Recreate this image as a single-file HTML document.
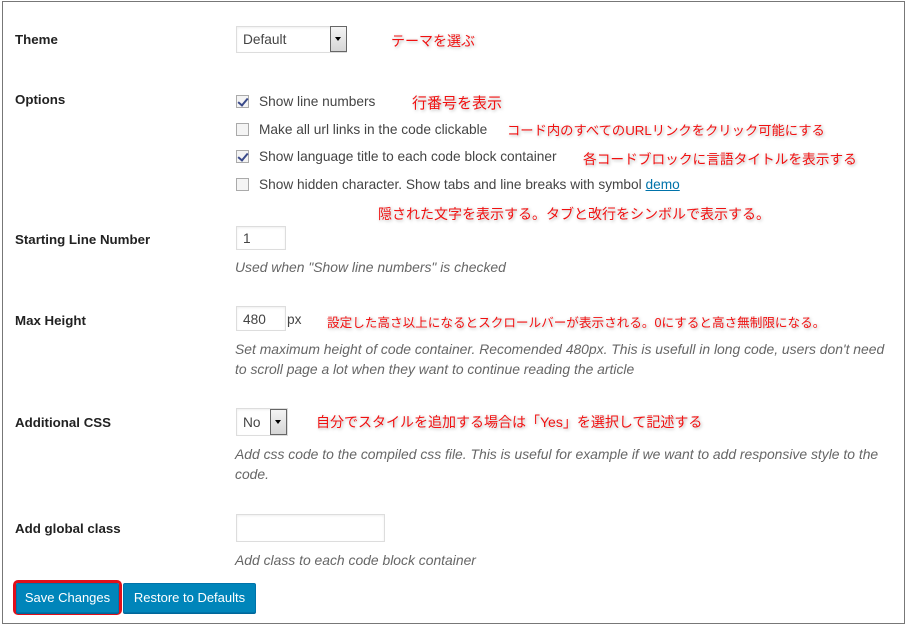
<!DOCTYPE html>
<html><head><meta charset="utf-8"><style>
*{box-sizing:border-box;margin:0;padding:0}
body{width:907px;height:626px;background:#fff;position:relative;overflow:hidden;font-family:"Liberation Sans","Noto Sans CJK JP",sans-serif;font-size:13px;color:#444}
.frame{position:absolute;left:2px;top:1px;width:903px;height:623px;border:1px solid #777}
.a{position:absolute;white-space:nowrap}
.lbl{font-weight:bold;color:#222;font-size:13.3px}
.t{color:#444;font-size:13.7px}
.d{font-style:italic;color:#666;font-size:13.9px}
.box{position:absolute;border:1px solid #ddd;background:#fff;box-shadow:inset 0 1px 2px rgba(0,0,0,.07)}
.cb{position:absolute;width:13px;height:13px;border:1px solid #aaa;background:#f4f4f4}
.cb.on::after{content:"";position:absolute;left:3px;top:0px;width:4px;height:8px;border:solid #3a4a8a;border-width:0 2px 2px 0;transform:rotate(40deg)}
.arr{position:absolute;border:1px solid #666;background:linear-gradient(#f4f4f4,#d6d6d6)}
.arr::after{content:"";position:absolute;left:4px;top:50%;margin-top:-2px;border-left:3px solid transparent;border-right:3px solid transparent;border-top:4px solid #000}
.jp{position:absolute;white-space:nowrap;color:#f01010;font-size:14px;text-shadow:0 0 2px #fff,1px 1px 3px rgba(0,0,0,.35)}
.btn{position:absolute;background:#0085ba;border:1px solid #0073aa;color:#fff;font-size:13px;text-align:center;line-height:28px;border-radius:2px;box-shadow:0 1px 0 #006799}
</style></head><body>
<div class="frame"></div>

<div class="a lbl" style="left:15px;top:32px">Theme</div>
<div class="box" style="left:236px;top:26px;width:111px;height:27px"></div>
<div class="a t" style="left:243px;top:32px">Default</div>
<div class="arr" style="left:330px;top:26px;width:17px;height:26px"></div>
<div class="jp" style="left:391px;top:31px">テーマを選ぶ</div>

<div class="a lbl" style="left:15px;top:92px">Options</div>
<div class="cb on" style="left:236px;top:95px"></div><div class="a t" style="left:259px;top:94px">Show line numbers</div>
<div class="cb" style="left:236px;top:123px"></div><div class="a t" style="left:259px;top:122px">Make all url links in the code clickable</div>
<div class="cb on" style="left:236px;top:150px"></div><div class="a t" style="left:259px;top:149px">Show language title to each code block container</div>
<div class="cb" style="left:236px;top:178px"></div><div class="a t" style="left:259px;top:177px">Show hidden character. Show tabs and line breaks with symbol <span style="color:#0073aa;text-decoration:underline">demo</span></div>
<div class="jp" style="left:412px;top:92px;font-size:15px">行番号を表示</div>
<div class="jp" style="left:507px;top:120px;font-size:13.3px">コード内のすべてのURLリンクをクリック可能にする</div>
<div class="jp" style="left:583px;top:148px;font-size:13.7px">各コードブロックに言語タイトルを表示する</div>
<div class="jp" style="left:378px;top:204px">隠された文字を表示する。タブと改行をシンボルで表示する。</div>

<div class="a lbl" style="left:15px;top:232px">Starting Line Number</div>
<div class="box" style="left:236px;top:226px;width:50px;height:24px"></div>
<div class="a t" style="left:243px;top:231px">1</div>
<div class="a d" style="left:235px;top:259px">Used when "Show line numbers" is checked</div>

<div class="a lbl" style="left:15px;top:313px">Max Height</div>
<div class="box" style="left:236px;top:306px;width:50px;height:25px"></div>
<div class="a t" style="left:243px;top:312px">480</div>
<div class="a t" style="left:287px;top:312px">px</div>
<div class="jp" style="left:327px;top:312px;font-size:12.6px">設定した高さ以上になるとスクロールバーが表示される。0にすると高さ無制限になる。</div>
<div class="a d" style="left:235px;top:341px">Set maximum height of code container. Recomended 480px. This is usefull in long code, users don't need</div>
<div class="a d" style="left:235px;top:361px">to scroll page a lot when they want to continue reading the article</div>

<div class="a lbl" style="left:15px;top:415px">Additional CSS</div>
<div class="box" style="left:236px;top:408px;width:52px;height:28px"></div>
<div class="a t" style="left:243px;top:415px">No</div>
<div class="arr" style="left:270px;top:409px;width:17px;height:26px"></div>
<div class="jp" style="left:316px;top:412px">自分でスタイルを追加する場合は「Yes」を選択して記述する</div>
<div class="a d" style="left:235px;top:446px">Add css code to the compiled css file. This is useful for example if we want to add responsive style to the</div>
<div class="a d" style="left:235px;top:466px">code.</div>

<div class="a lbl" style="left:15px;top:521px">Add global class</div>
<div class="box" style="left:236px;top:514px;width:149px;height:28px"></div>
<div class="a d" style="left:235px;top:552px">Add class to each code block container</div>

<div style="position:absolute;left:13px;top:580px;width:109px;height:35px;border:3px solid #e0101a;border-radius:5px"></div>
<div class="btn" style="left:16px;top:583px;width:103px;height:30px">Save Changes</div>
<div class="btn" style="left:123px;top:583px;width:133px;height:30px">Restore to Defaults</div>
</body></html>
